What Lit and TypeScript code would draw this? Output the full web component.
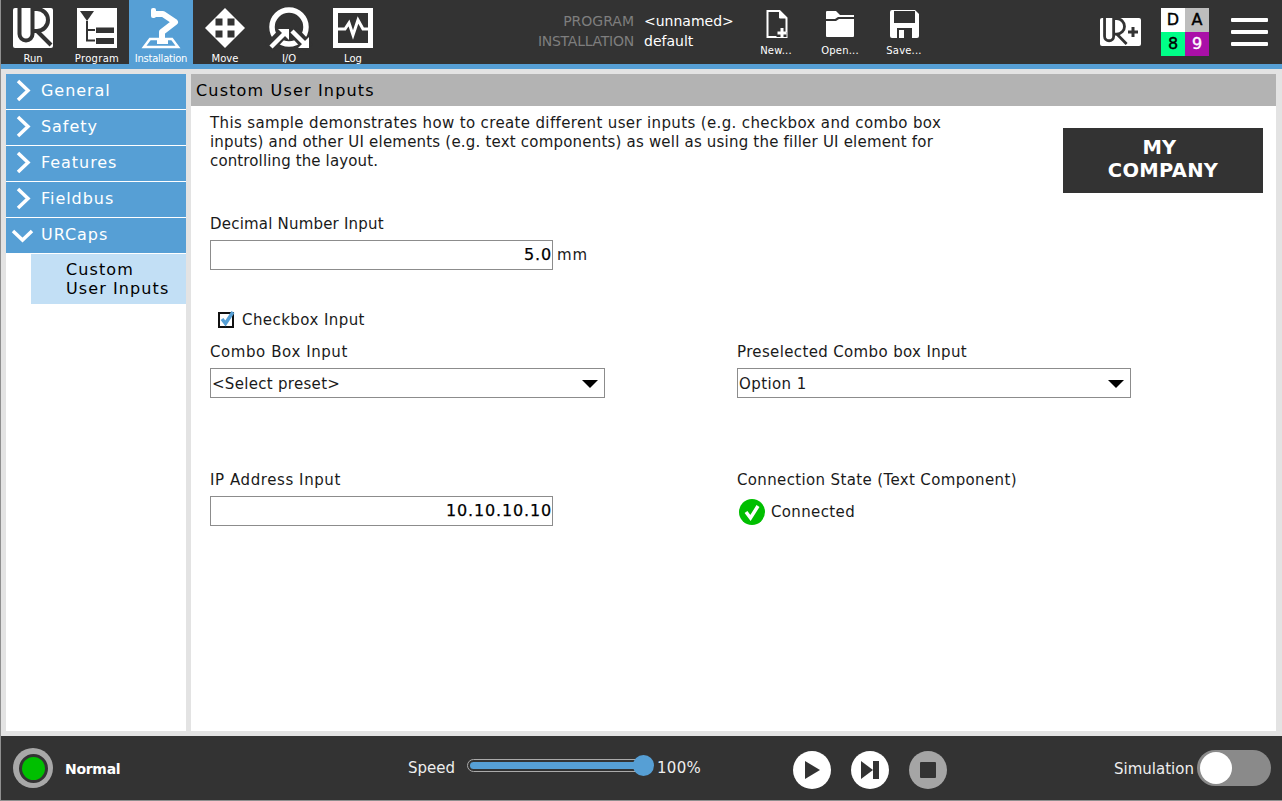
import { LitElement, html, css, svg } from 'lit';
import { customElement } from 'lit/decorators.js';

const ur = (stroke: string) => svg`
  <path d="M6.500 0V26a6.500 6.500 0 0 0 13 0V1H24a11 11 0 0 1 0 22H20" fill="none" stroke=${stroke} stroke-width="4"/>
  <path d="M24 23L38 37" fill="none" stroke=${stroke} stroke-width="4"/>`;

const tabs = [
  {
    label: 'Run',
    icon: svg`<rect width="40" height="40" rx="2" fill="#fff"/>${ur('#333')}`,
  },
  {
    label: 'Program',
    cls: 'wide',
    icon: svg`<rect width="40" height="40" fill="#fff"/>
      <path d="M3 3H17L10 13Z" fill="#333"/>
      <path d="M10 13V32.500H18M10 22H18" fill="none" stroke="#333" stroke-width="2"/>
      <path d="M19 19.500H37V25H19ZM19 30H37V36H19Z" fill="#333"/>`,
  },
  {
    label: 'Installation',
    cls: 'active narrow',
    icon: svg`<path d="M3 39L9 31H31L37 39Z" fill="none" stroke="#fff" stroke-width="2.500"/>
      <path d="M21 36V24L34 14L22 6H12" fill="none" stroke="#fff" stroke-width="6" stroke-linejoin="round"/>
      <rect x="10" y="0" width="5" height="10" rx="2" fill="#fff"/>
      <rect x="16" y="30" width="11" height="6" fill="#fff"/>`,
  },
  {
    label: 'Move',
    icon: svg`<path d="M20 0L40 20L20 40L0 20Z" fill="#fff"/>
      <path d="M10.500 10.500H17.500V17.500H10.500ZM22.500 10.500H29.500V17.500H22.500ZM10.500 22.500H17.500V29.500H10.500ZM22.500 22.500H29.500V29.500H22.500Z" fill="#333"/>`,
  },
  {
    label: 'I/O',
    icon: svg`<circle cx="20" cy="19" r="17" fill="none" stroke="#fff" stroke-width="5.500"/>
      <path d="M0 40L16 23" stroke="#333" stroke-width="11" fill="none"/>
      <path d="M40 40L24 23" stroke="#333" stroke-width="11" fill="none"/>
      <path d="M2 39L15 26" stroke="#fff" stroke-width="4.500" fill="none"/>
      <path d="M9 21H20V32Z" fill="#fff"/>
      <path d="M23 23L36 36" stroke="#fff" stroke-width="4.500" fill="none"/>
      <path d="M40 29V40H29Z" fill="#fff"/>`,
  },
  {
    label: 'Log',
    icon: svg`<rect width="40" height="40" fill="#fff"/><rect x="5" y="5" width="30" height="30" fill="#333"/>
      <path d="M5 21H12L16 15L20 27L25 12L30 21H35" fill="none" stroke="#fff" stroke-width="3"/>`,
  },
];

const files = [
  {
    label: 'New...',
    icon: svg`<g transform="translate(4.500 0)">
      <path d="M1 1H13L20 8V27H1Z" fill="none" stroke="#fff" stroke-width="2"/>
      <path d="M13 1V8H20" fill="#fff" stroke="#fff"/>
      <path d="M10 22H20V27H10Z" fill="#333"/>
      <path d="M11 23H20M15.500 18V28" stroke="#fff" stroke-width="3"/></g>`,
  },
  {
    label: 'Open...',
    icon: svg`<path d="M0 2a1 1 0 0 1 1-1H10L14 5H28V7H12L9 9H0Z" fill="#fff"/>
      <path d="M0 11H10L13 9H28V26a1 1 0 0 1-1 1H1a1 1 0 0 1-1-1Z" fill="#fff"/>`,
  },
  {
    label: 'Save...',
    icon: svg`<path d="M2 0H25L29 4V26a2 2 0 0 1-2 2H2a2 2 0 0 1-2-2V2a2 2 0 0 1 2-2Z" fill="#fff"/>
      <path d="M4 1H25V13H4Z" fill="#333"/>
      <path d="M7 18H22V28H7Z" fill="#333"/>
      <rect x="9" y="20" width="5" height="8" fill="#fff"/>`,
  },
];

const sideItems = ['General', 'Safety', 'Features', 'Fieldbus'];

@customElement('app-root')
export class AppRoot extends LitElement {
  static styles = css`
    :host {
      display: block;
      width: 1282px;
      height: 801px;
      font-family: 'DejaVu Sans', sans-serif;
      color: #1a1a1a;
      background: #e3e3e3;
      overflow: hidden;
    }
    .page {
      display: flex;
      flex-direction: column;
      border-left: 1px solid #8f8f8f;
      border-bottom: 1px solid #8f8f8f;
      box-sizing: border-box;
      height: 801px;
    }
    .top {
      display: flex;
      height: 64px;
      background: #333;
      border-bottom: 5px solid #569fd5;
      flex: none;
    }
    .tab {
      width: 64px;
      height: 64px;
      display: flex;
      flex-direction: column;
      align-items: center;
      padding-top: 8px;
      box-sizing: border-box;
      color: #fff;
      font-size: 10px;
      white-space: nowrap;
    }
    .tab.active {
      background: #569fd5;
    }
    .tab.narrow {
      letter-spacing: -0.25px;
    }
    .tab.wide {
      letter-spacing: 0.3px;
    }
    .tab svg {
      display: block;
      margin-bottom: 5px;
      overflow: visible;
    }
    .info {
      display: grid;
      grid-template-columns: 238px auto;
      column-gap: 10px;
      grid-auto-rows: 20px;
      margin: 11px 0 0 11px;
      width: 348px;
      font-size: 14px;
      line-height: 20px;
      color: #fff;
    }
    .info .k {
      text-align: right;
      color: #7e7e7e;
    }
    .info .k.tight {
      letter-spacing: -0.25px;
    }
    .file {
      width: 64px;
      height: 64px;
      display: flex;
      flex-direction: column;
      align-items: center;
      box-sizing: border-box;
      color: #fff;
      font-size: 10px;
      letter-spacing: 0.2px;
    }
    .file .ico {
      height: 28px;
      margin-top: 10px;
    }
    .file svg {
      display: block;
      overflow: visible;
    }
    .file span {
      margin-top: 7px;
    }
    .urplus {
      margin: 18px 0 0 164px;
      width: 41px;
      height: 28px;
      display: block;
    }
    .da {
      display: grid;
      grid-template-columns: 24px 24px;
      grid-auto-rows: 24px;
      margin: 8px 0 0 20px;
      font-size: 16px;
      text-align: center;
      line-height: 24px;
      height: 48px;
      -webkit-text-stroke: 0.4px currentColor;
    }
    .cell-d {
      background: #fff;
      color: #000;
    }
    .cell-a {
      background: #bdbdbd;
      color: #000;
    }
    .cell-8 {
      background: #00ff88;
      color: #000;
    }
    .cell-9 {
      background: #aa0fa8;
      color: #fff;
    }
    .burger {
      margin: 18px 0 0 22px;
      width: 37px;
      display: flex;
      flex-direction: column;
      gap: 8px;
    }
    .burger i {
      display: block;
      height: 4px;
      border-radius: 1px;
      background: #fff;
    }
    .middle {
      flex: 1;
      display: flex;
      gap: 5px;
      padding: 5px 6px 5px 5px;
      min-height: 0;
    }
    .side {
      width: 180px;
      background: #fff;
      flex: none;
    }
    .side-item {
      height: 35px;
      margin-bottom: 1px;
      background: #569fd5;
      color: #fff;
      display: flex;
      align-items: center;
      font-size: 16px;
      letter-spacing: 0.95px;
      position: relative;
      padding: 0 0 2px 35px;
      box-sizing: border-box;
    }
    .side-item svg {
      position: absolute;
      left: 5px;
      top: 5px;
    }
    .side-sub {
      margin-left: 25px;
      height: 50px;
      background: #c2dff5;
      box-sizing: border-box;
      padding: 6px 0 0 35px;
      font-size: 16px;
      line-height: 19px;
      letter-spacing: 1.1px;
      color: #000;
      margin-top: 1px;
    }
    .main {
      flex: 1;
      background: #fff;
      min-width: 0;
    }
    .title {
      height: 32px;
      background: #b3b3b3;
      color: #000;
      font-size: 16px;
      letter-spacing: 1.17px;
      line-height: 33px;
      padding-left: 5px;
    }
    .body {
      padding: 8px 13px 0 19px;
      font-size: 15px;
      letter-spacing: 0.36px;
    }
    .intro {
      display: flex;
      justify-content: space-between;
    }
    .intro p {
      margin: 0;
      width: 745px;
      line-height: 19px;
      white-space: nowrap;
    }
    .intro .l1 {
      letter-spacing: 0.36px;
    }
    .intro .l2 {
      letter-spacing: 0.2px;
    }
    .intro .l3 {
      letter-spacing: 0.13px;
    }
    .logo {
      width: 200px;
      height: 65px;
      background: #333;
      color: #fff;
      font-size: 19.500px;
      font-weight: 700;
      letter-spacing: 0.3px;
      line-height: 23px;
      text-align: center;
      box-sizing: border-box;
      padding-top: 8px;
      margin-top: 14px;
    }
    .label {
      line-height: 19px;
      white-space: nowrap;
    }
    .label.decimal {
      margin-top: 22px;
      letter-spacing: 0.2px;
    }
    .label.wide {
      letter-spacing: 0.58px;
    }
    .field {
      width: 343px;
      height: 30px;
      border: 1px solid #8c8c8c;
      box-sizing: border-box;
      text-align: right;
      line-height: 28px;
      font-size: 16px;
      letter-spacing: 0.85px;
      color: #000;
      -webkit-text-stroke: 0.25px #000;
    }
    .row {
      display: flex;
      align-items: center;
      gap: 4px;
      margin-top: 6px;
      letter-spacing: 1px;
    }
    .check {
      display: flex;
      align-items: center;
      gap: 8px;
      margin: 40px 0 0 8px;
      height: 19px;
      letter-spacing: 0.43px;
    }
    .check svg {
      display: block;
      overflow: visible;
    }
    .cols {
      display: grid;
      grid-template-columns: 527px 1fr;
      margin-top: 14px;
    }
    .combo {
      width: 395px;
      height: 30px;
      border: 1px solid #8c8c8c;
      box-sizing: border-box;
      margin-top: 6px;
      padding: 1px 6px 0 1px;
      display: flex;
      align-items: center;
      justify-content: space-between;
      letter-spacing: 0.3px;
    }
    .combo.second {
      width: 394px;
      letter-spacing: 0.4px;
    }
    .combo i {
      display: block;
      width: 0;
      height: 0;
      border-left: 8px solid transparent;
      border-right: 8px solid transparent;
      border-top: 8px solid #000;
    }
    .ip {
      margin-top: 73px;
    }
    .ip .field {
      margin-top: 6px;
    }
    .conn {
      display: flex;
      align-items: center;
      gap: 6px;
      margin: 9px 0 0 2px;
      height: 26px;
    }
    .bottom {
      flex: none;
      height: 64px;
      background: #333;
      color: #fff;
      display: flex;
      align-items: center;
      font-size: 15px;
    }
    .led {
      width: 40px;
      height: 40px;
      border-radius: 50%;
      background: #a8a8a8;
      margin-left: 12px;
      display: flex;
      align-items: center;
      justify-content: center;
    }
    .led i {
      display: block;
      width: 23px;
      height: 23px;
      border-radius: 50%;
      background: #00bf00;
      border: 3px solid #333;
    }
    .state {
      font-size: 14px;
      font-weight: 700;
      margin-left: 12px;
      padding-top: 1px;
      width: 343px;
      letter-spacing: -0.3px;
    }
    .speed-label {
      width: 59px;
      color: #eee;
    }
    .track {
      width: 176px;
      height: 13px;
      box-sizing: border-box;
      border: 1px solid #aaa;
      padding: 2px;
      border-radius: 7px;
      position: relative;
      margin-top: -6px;
    }
    .track b {
      display: block;
      height: 7px;
      border-radius: 4px;
      background: #569fd5;
    }
    .track u {
      display: block;
      position: absolute;
      right: -12px;
      top: -5px;
      width: 21px;
      height: 21px;
      border-radius: 50%;
      background: #569fd5;
    }
    .pct {
      width: 136px;
      margin-left: 14px;
      color: #eee;
      letter-spacing: 0.3px;
    }
    .round {
      width: 38px;
      height: 38px;
      border-radius: 50%;
      background: #fff;
      margin-right: 20px;
      display: flex;
      align-items: center;
      justify-content: center;
      margin-top: 4px;
    }
    .round.off {
      background: #a5a5a5;
    }
    .sim {
      margin-left: 147px;
      padding-top: 1px;
      width: 83px;
      color: #eee;
    }
    .toggle {
      width: 74px;
      height: 36px;
      border-radius: 18px;
      background: #8a8a8a;
      position: relative;
    }
    .toggle i {
      display: block;
      position: absolute;
      left: 2.500px;
      top: 2px;
      width: 32px;
      height: 32px;
      border-radius: 50%;
      background: #fff;
    }
  `;

  private chevron(open = false) {
    return open
      ? html`<svg width="30" height="25" viewBox="0 0 30 25"><path d="M2 8L11.500 17L21 8" fill="none" stroke="#fff" stroke-width="3.500"/></svg>`
      : html`<svg width="30" height="25" viewBox="0 0 30 25"><path d="M7 2L17 11.500L7 21" fill="none" stroke="#fff" stroke-width="3.500"/></svg>`;
  }

  render() {
    return html`
      <div class="page">
        <div class="top">
          ${tabs.map(
            (t) => html`<div class="tab ${t.cls ?? ''}">
              <svg width="40" height="40" viewBox="0 0 40 40">${t.icon}</svg>${t.label}
            </div>`
          )}
          <div class="info">
            <span class="k">PROGRAM</span><span>&lt;unnamed&gt;</span>
            <span class="k tight">INSTALLATION</span><span>default</span>
          </div>
          ${files.map(
            (f) => html`<div class="file">
              <div class="ico"><svg width="29" height="28" viewBox="0 0 29 28">${f.icon}</svg></div>
              <span>${f.label}</span>
            </div>`
          )}
          <svg class="urplus" viewBox="0 0 41 28">
            <rect width="41" height="28" rx="2" fill="#fff"/>
            <g transform="scale(0.7)">${ur('#333')}</g>
            <path d="M28 14H38M33 9V19" stroke="#333" stroke-width="3"/>
          </svg>
          <div class="da">
            <span class="cell-d">D</span>
            <span class="cell-a">A</span>
            <span class="cell-8">8</span>
            <span class="cell-9">9</span>
          </div>
          <div class="burger"><i></i><i></i><i></i></div>
        </div>

        <div class="middle">
          <div class="side">
            ${sideItems.map((s) => html`<div class="side-item">${this.chevron()}${s}</div>`)}
            <div class="side-item">${this.chevron(true)}URCaps</div>
            <div class="side-sub">Custom<br />User Inputs</div>
          </div>
          <div class="main">
            <div class="title">Custom User Inputs</div>
            <div class="body">
              <div class="intro">
                <p>
                  <span class="l1">This sample demonstrates how to create different user inputs (e.g. checkbox and combo box</span><br />
                  <span class="l2">inputs) and other UI elements (e.g. text components) as well as using the filler UI element for</span><br />
                  <span class="l3">controlling the layout.</span>
                </p>
                <div class="logo">MY&nbsp;<br />COMPANY</div>
              </div>
              <div class="label decimal">Decimal Number Input</div>
              <div class="row"><div class="field">5.0</div>mm</div>
              <div class="check">
                <svg width="16" height="16" viewBox="0 0 16 16">
                  <rect x="1" y="1" width="14" height="14" fill="#fff" stroke="#111" stroke-width="2"/>
                  <path d="M4 7L7.500 11.500L15 0" fill="none" stroke="#569fd5" stroke-width="3.500"/>
                </svg>
                Checkbox Input
              </div>
              <div class="cols">
                <div>
                  <div class="label wide">Combo Box Input</div>
                  <div class="combo">&lt;Select preset&gt;<i></i></div>
                  <div class="ip">
                    <div class="label wide">IP Address Input</div>
                    <div class="field">10.10.10.10</div>
                  </div>
                </div>
                <div>
                  <div class="label">Preselected Combo box Input</div>
                  <div class="combo second">Option 1<i></i></div>
                  <div class="ip">
                    <div class="label">Connection State (Text Component)</div>
                    <div class="conn">
                      <svg width="26" height="26" viewBox="0 0 26 26">
                        <circle cx="13" cy="13" r="13" fill="#00bf00"/>
                        <path d="M7 13L11.500 19L19 7" fill="none" stroke="#fff" stroke-width="3.500"/>
                      </svg>
                      Connected
                    </div>
                  </div>
                </div>
              </div>
            </div>
          </div>
        </div>

        <div class="bottom">
          <div class="led"><i></i></div>
          <div class="state">Normal</div>
          <div class="speed-label">Speed</div>
          <div class="track"><b></b><u></u></div>
          <div class="pct">100%</div>
          <div class="round">
            <svg width="18" height="18" viewBox="0 0 18 18"><path d="M2 0L17 9L2 18Z" fill="#333"/></svg>
          </div>
          <div class="round">
            <svg width="18" height="18" viewBox="0 0 18 18"><path d="M0 0L12 9L0 18Z" fill="#333"/><rect x="12" y="0" width="6" height="18" fill="#333"/></svg>
          </div>
          <div class="round off">
            <svg width="16" height="16" viewBox="0 0 16 16"><rect width="16" height="16" rx="1" fill="#333"/></svg>
          </div>
          <div class="sim">Simulation</div>
          <div class="toggle"><i></i></div>
        </div>
      </div>
    `;
  }
}
